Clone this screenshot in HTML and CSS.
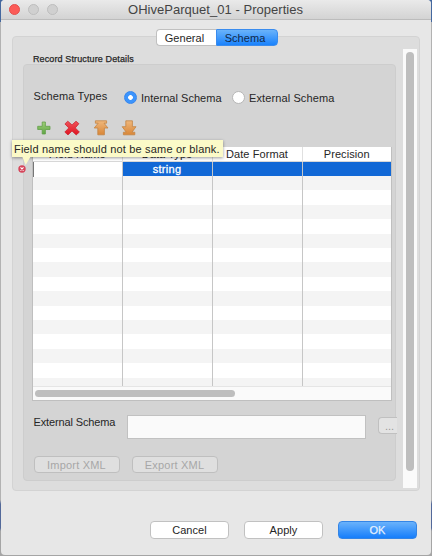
FILE: index.html
```html
<!DOCTYPE html>
<html lang="en">
<head>
<meta charset="utf-8">
<title>OHiveParquet_01 - Properties</title>
<link rel="stylesheet" href="styles.css">
</head>
<body>
<main class="window">
  <header class="titlebar">
    <span class="light close"></span><span class="light"></span><span class="light"></span>
    <h1>OHiveParquet_01 - Properties</h1>
  </header>
  <nav class="tabs"><button class="tab">General</button><button class="tab active">Schema</button></nav>
  <section class="panel">
    <div class="content">
      <h2>Record Structure Details</h2>
      <div class="group">
        <div class="types">
          <span class="label">Schema Types</span>
          <span class="radio on"></span><span class="internal">Internal Schema</span>
          <span class="radio"></span><span class="external">External Schema</span>
        </div>
        <div class="tools">
          <svg viewBox="0 0 16 16"><path d="M6.2 2h3.2v4.3H14v3.2H9.4V14H6.2V9.5H1.7V6.3h4.5z" fill="url(#green)" stroke="#62a04a" stroke-width=".8"/></svg>
          <svg viewBox="0 0 16 16"><path d="M3.8 1.2 8 4.9l4-3.7 2.9 2.5-3.6 4.2 4.1 4.2-3.2 2.8L8 11l-4 3.9-3.2-2.8 4-4.2-3.9-4z" fill="url(#red)" stroke="#c91d29" stroke-width=".7"/></svg>
          <svg viewBox="0 0 16 16"><path d="M2.4.8h11.2v2.4H11L15 8h-3.6v6.8H4.8V8H1.2l4-4.8H2.4z" fill="url(#orange)" stroke="#c48442" stroke-width=".8"/></svg>
          <svg viewBox="0 0 16 16"><path d="M4.8.8h6.6v5.9H15l-4 5.5h2.8v2.6H2.4v-2.6h2.8l-4-5.5h3.6z" fill="url(#orange)" stroke="#c48442" stroke-width=".8"/></svg>
        </div>
        <div class="table">
          <div class="grid head"><span>Field Name</span><span>Data Type</span><span>Date Format</span><span>Precision</span></div>
          <div class="rows">
            <div class="grid selected"><span class="editor"></span><span>string</span><span></span><span></span></div>
            <div class="grid blank"><span></span><span></span><span></span><span></span></div>
          </div>
          <div class="hscroll"><div class="hthumb"></div></div>
        </div>
        <div class="schema-row"><span class="label">External Schema</span><div class="field"></div><button class="browse">...</button></div>
        <div class="xml-row"><button>Import XML</button><button>Export XML</button></div>
      </div>
    </div>
    <div class="vscroll"><div class="vthumb"></div></div>
  </section>
  <footer class="actions"><button>Cancel</button><button>Apply</button><button class="ok">OK</button></footer>
  <svg class="error" viewBox="0 0 8 8"><circle cx="4" cy="4" r="3.7" fill="#d6455a"/><path d="m2.5 2.4 3 3.2m0-3.2-3 3.2" stroke="#fff" stroke-width="1.1"/></svg>
  <div class="tooltip"><span>Field name should not be same or blank.</span><svg viewBox="0 0 10 11"><path d="M0 0h10L4 10z" fill="#fbfac8"/></svg></div>
</main>
<svg class="defs" width="0" height="0"><defs>
  <linearGradient id="green" x2="0" y2="1"><stop stop-color="#a0cf78"/><stop offset="1" stop-color="#5fa545"/></linearGradient>
  <linearGradient id="red" x2="0" y2="1"><stop stop-color="#f0525a"/><stop offset="1" stop-color="#df1522"/></linearGradient>
  <linearGradient id="orange" x2="0" y2="1"><stop stop-color="#efb77c"/><stop offset="1" stop-color="#d98738"/></linearGradient>
</defs></svg>
</body>
</html>
```

FILE: styles.css
```css
* { box-sizing: border-box; }
body { margin: 0; height: 556px; overflow: hidden; padding: 0 1px 1px; background: linear-gradient(#44689f 0 22px, #b2b2b2 22px 500px, #53699a 504px 528px, #a5a5a5 531px); font: 11px "Liberation Sans", Arial, sans-serif; color: #262626; }
button { font: inherit; color: inherit; padding: 0; margin: 0; }
h1, h2 { margin: 0; font-weight: normal; }
.window { position: relative; height: 555px; display: flex; flex-direction: column; background: #e7e7e7; border-radius: 4px; overflow: hidden; white-space: nowrap; }
.titlebar { flex: none; height: 20px; display: flex; align-items: center; gap: 8px; padding-left: 7.5px; background: linear-gradient(#eaeaea, #d3d3d3); border-bottom: 1px solid #bcbcbc; }
.light { flex: none; width: 11px; height: 11px; border-radius: 50%; background: #d0d0d0; border: 1px solid #bdbdbd; }
.close { background: #fc5b57; border-color: #e2504c; }
h1 { margin-left: 62.5px; font-size: 13px; line-height: 19px; letter-spacing: .03px; color: #444; }
.tabs { position: relative; z-index: 1; flex: none; height: 17px; margin: 9px 0 0 155px; display: flex; }
.tab { width: 60px; padding-right: 4px; border: 1px solid #c0c0c0; border-right: 0; border-radius: 4px 0 0 4px; background: #fff; letter-spacing: .05px; }
.tab.active { width: 62px; border: 1px solid #3a8cee; border-radius: 0 4px 4px 0; background: linear-gradient(#6ab3fa, #1a82fc); color: #10294a; }
.panel { flex: none; width: 408px; height: 455px; margin: -10px 0 0 11px; border: 1px solid #d3d3d3; border-radius: 4px; background: #dddddd; display: flex; }
.content { flex: none; width: 383.5px; padding: 16px 0 0 10px; overflow: hidden; }
h2 { height: 11px; margin-left: 10px; font-size: 9px; line-height: 13px; letter-spacing: .12px; -webkit-text-stroke: .25px #262626; }
.group { width: 373px; height: 417px; border: 1px solid #cdcdcd; border-radius: 4px; background: #d4d4d4; padding: 24px 0 0 8px; }
.types { display: flex; align-items: center; height: 17px; letter-spacing: .11px; }
.label { width: 92px; padding-left: 1.5px; }
.types .label { position: relative; top: -2px; }
.radio { width: 13px; height: 13px; border-radius: 50%; border: 1px solid #b6b6b6; background: #fff; }
.radio.on { border: 1px solid #3686ee; background: radial-gradient(circle, #fff 0 2px, #3c94fc 2.7px); }
.internal { width: 95px; padding-left: 4px; letter-spacing: .03px; }
.external { padding-left: 4px; }
.tools { display: flex; gap: 12.5px; padding: 14px 0 0 3.5px; }
.tools svg { width: 16px; height: 16px; }
.table { width: 360px; height: 254px; margin-top: 11px; background: #fff; border: 1px solid #bfbfbf; border-top: 0; }
.grid { display: grid; grid-template-columns: 89.5px 90px 90px 1fr; }
.grid > span { border-right: 1px solid #c6c6c6; text-align: center; }
.grid > span:last-child { border-right: 0; }
.head { height: 15px; line-height: 15px; letter-spacing: .08px; border-bottom: 1px solid #d8d8d8; }
.head span { border-color: #e0e0e0; }
.rows { height: 224px; overflow: hidden; }
.selected { height: 14.4px; background: #1168d6; color: #fff; line-height: 14.5px; -webkit-text-stroke: .3px #fff; letter-spacing: .3px; }
.editor { background: #fff; border-left: 1px solid #777; }
.blank { height: 210px; background: repeating-linear-gradient(#f4f4f4 0 14.4px, #fff 14.4px 28.8px); }
.hscroll { height: 14px; padding: 3px 2px; background: #fafafa; border-top: 1px solid #e5e5e5; }
.hthumb { width: 200px; height: 7px; border-radius: 4px; background: #bebebe; }
.schema-row { display: flex; height: 24px; margin-top: 14px; width: 373px; }
.schema-row .label { width: 95px; line-height: 15px; letter-spacing: -.13px; }
.field { width: 239px; height: 24px; background: #fafafa; border: 1px solid #c1c1c1; }
.browse { width: 22px; height: 17px; margin: 2px 0 0 12px; background: #e3e3e3; border: 1px solid #c0c0c0; border-right: 0; border-radius: 4px 0 0 4px; color: #999; }
.xml-row { display: flex; gap: 12px; margin: 17px 0 0 1.5px; }
.xml-row button { width: 86px; height: 17px; border: 1px solid #bfbfbf; border-radius: 4px; background: #dfdfdf; color: #a7a7a7; letter-spacing: .2px; }
.vscroll { flex: none; width: 14px; height: 439px; margin: 12px 0 0 6.5px; padding: 3px; background: #fafafa; }
.vthumb { width: 8px; height: 419px; border-radius: 4px; background: #bebebe; }
.actions { display: flex; gap: 15px; margin: 30px 0 0 149px; }
.actions button { width: 79px; height: 18px; border: 1px solid #c1c1c1; border-radius: 4px; background: #fff; letter-spacing: .08px; }
.actions .ok { border-color: #3485e6; background: linear-gradient(#6ab2fb, #167efb); color: #e4f1ff; -webkit-text-stroke: .25px; }
.error { position: absolute; left: 16.5px; top: 165px; width: 8px; height: 8px; }
.tooltip { position: absolute; left: 11px; top: 140px; width: 211px; height: 17px; padding-left: 2px; background: #fbfac8; box-shadow: 0 1px 3px #0006; line-height: 18px; letter-spacing: .18px; }
.tooltip svg { position: absolute; left: 10px; top: 16px; width: 9px; height: 10px; }
.defs { position: absolute; }
```
